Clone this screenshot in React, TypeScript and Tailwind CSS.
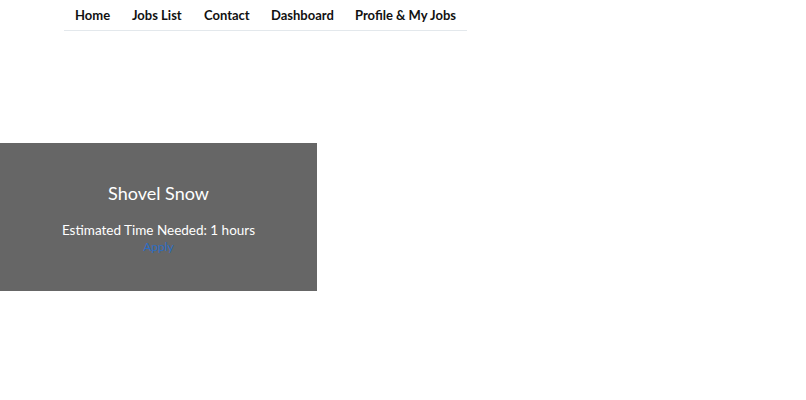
export default function App() {
  const items: [string, string][] = [
    ["Home", "w-[68px] pl-[11px]"],
    ["Jobs List", "w-[72px]"],
    ["Contact", "w-[67px]"],
    ["Dashboard", "w-[84px]"],
    ["Profile & My Jobs", "w-[112px]"],
  ];
  return (
    <div className="bg-white w-[806px] h-[400px] overflow-hidden" style={{ fontFamily: 'Lato, "Noto Sans", sans-serif' }}>
      <nav className="ml-[64px] w-[403px] border-b border-[#e3e8ec] flex h-[31px] items-center">
        {items.map(([t, c]) => (
          <a key={t} className={`${c} whitespace-nowrap text-[13px] font-bold text-[#111] leading-none`}>{t}</a>
        ))}
      </nav>
      <div className="mt-[112px] w-[317px] h-[148px] bg-[#666666] flex flex-col items-center text-white">
        <div className="mt-[38px] text-[18px] leading-[24px]">Shovel Snow</div>
        <div className="mt-[16px] text-[13.5px] leading-[18px]">Estimated Time Needed: 1 hours</div>
        <a className="text-[12px] leading-[16px] text-[#2b6cc4]">Apply</a>
      </div>
    </div>
  );
}
